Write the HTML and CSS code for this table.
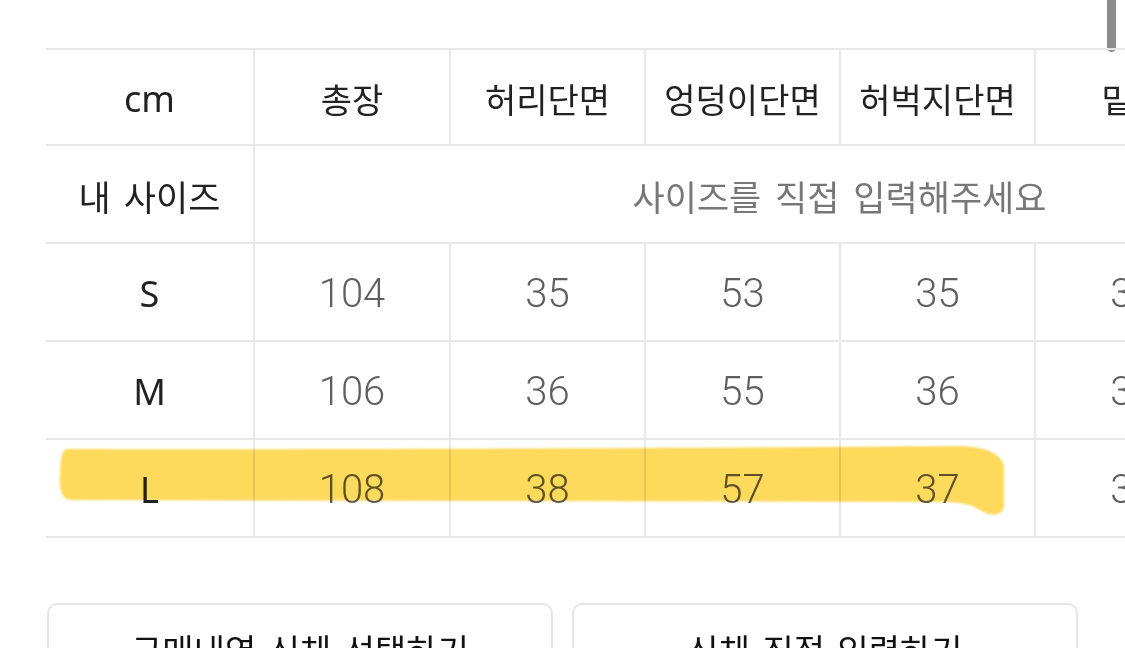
FILE: index.html
```html
<!DOCTYPE html>
<html lang="ko">
<head>
<meta charset="utf-8">
<title>사이즈</title>
<link rel="stylesheet" href="styles.css">
</head>
<body>
<div class="page">
  <div class="scrollbar"></div>
  <div class="table-wrap">
    <table class="size-table">
      <colgroup>
        <col class="col-label">
        <col class="col-first">
        <col class="col-data"><col class="col-data">
        <col class="col-data"><col class="col-data"><col class="col-data">
      </colgroup>
      <thead>
        <tr>
          <th class="label latin">cm</th>
          <th>총장</th>
          <th>허리단면</th>
          <th>엉덩이단면</th>
          <th>허벅지단면</th>
          <th>밑위</th>
          <th>밑단단면</th>
        </tr>
      </thead>
      <tbody>
        <tr class="mine">
          <th class="label spaced">내 사이즈</th>
          <td colspan="6" class="placeholder">사이즈를 직접 입력해주세요</td>
        </tr>
        <tr>
          <th class="label latin">S</th>
          <td>104</td><td>35</td><td>53</td><td>35</td><td>33</td><td>21</td>
        </tr>
        <tr>
          <th class="label latin">M</th>
          <td>106</td><td>36</td><td>55</td><td>36</td><td>34</td><td>22</td>
        </tr>
        <tr>
          <th class="label latin">L</th>
          <td>108</td><td>38</td><td>57</td><td>37</td><td>35</td><td>23</td>
        </tr>
      </tbody>
    </table>
    <svg class="highlight" width="1125" height="648" viewBox="0 0 1125 648" aria-hidden="true">
      <defs>
        <filter id="soft" x="-5%" y="-50%" width="110%" height="200%">
          <feGaussianBlur stdDeviation="1.2"/>
        </filter>
      </defs>
      <path filter="url(#soft)" fill="#fdd95c" d="M 68 449 C 300 450 700 448 955 446 C 985 446 1001 453 1004 466 L 1004 506 C 1003 516 990 517 980 510 C 968 503 958 502 940 502 L 72 500 C 61 500 59 490 60 472 C 61 456 62 449 68 449 Z"/>
    </svg>
  </div>
  <div class="actions">
    <button class="action">구매내역 신체 선택하기</button>
    <button class="action">신체 직접 입력하기</button>
  </div>
</div>
</body>
</html>
```
FILE: styles.css
```css
* { box-sizing: border-box; }
html, body {
  margin: 0;
  padding: 0;
  background: #fff;
  width: 1125px;
  height: 648px;
  overflow: hidden;
}
body {
  font-family: "Noto Sans", "Noto Sans CJK KR", sans-serif;
  color: #222;
}
.page {
  position: relative;
  width: 1125px;
  height: 648px;
  overflow: hidden;
  padding-top: 48px;
}
.scrollbar {
  position: absolute;
  top: -10px;
  left: 1107px;
  width: 9px;
  height: 62px;
  border-radius: 5px;
  background: #8c8c8c;
}
.table-wrap {
  position: relative;
  padding-left: 46px;
  width: 1125px;
}
.size-table {
  border-collapse: separate;
  border-spacing: 0;
  table-layout: fixed;
  width: 1380px;
}
.col-label { width: 209px; }
.col-first { width: 196px; }
.col-data { width: 195px; }
.size-table th,
.size-table td {
  border-right: 2px solid #e8e8e8;
  border-bottom: 2px solid #e8e8e8;
  text-align: center;
  vertical-align: middle;
  padding: 0;
  height: 98px;
  font-weight: 400;
  white-space: nowrap;
}
.size-table thead th {
  border-top: 2px solid #e8e8e8;
  height: 98px;
  font-size: 34px;
  color: #222;
  padding-top: 2px;
}
.size-table tbody th {
  font-size: 34px;
  color: #222;
  padding-top: 2px;
}
.size-table .spaced {
  word-spacing: 4px;
  font-size: 35px;
}
.size-table .latin {
  font-size: 36px;
}
.size-table td {
  font-family: Roboto, "Noto Sans", sans-serif;
  font-weight: 300;
  font-size: 40px;
  color: #5f5f5f;
  padding-top: 2px;
}
.size-table td.placeholder {
  font-family: "Noto Sans CJK KR", sans-serif;
  font-weight: 400;
  font-size: 35px;
  word-spacing: 4px;
  color: #777;
}
.highlight {
  position: absolute;
  top: -48px;
  left: 0;
  pointer-events: none;
  mix-blend-mode: multiply;
}
.actions {
  display: flex;
  gap: 19px;
  padding: 0 47px;
  margin-top: 65px;
}
.action {
  flex: 0 0 506px;
  height: 90px;
  border: 2px solid #e6e6e6;
  border-radius: 10px;
  background: #fff;
  font-family: "Noto Sans CJK KR", sans-serif;
  font-size: 34px;
  word-spacing: 3px;
  color: #111;
  padding: 20px 0 0;
  display: flex;
  justify-content: center;
  align-items: flex-start;
}
```
